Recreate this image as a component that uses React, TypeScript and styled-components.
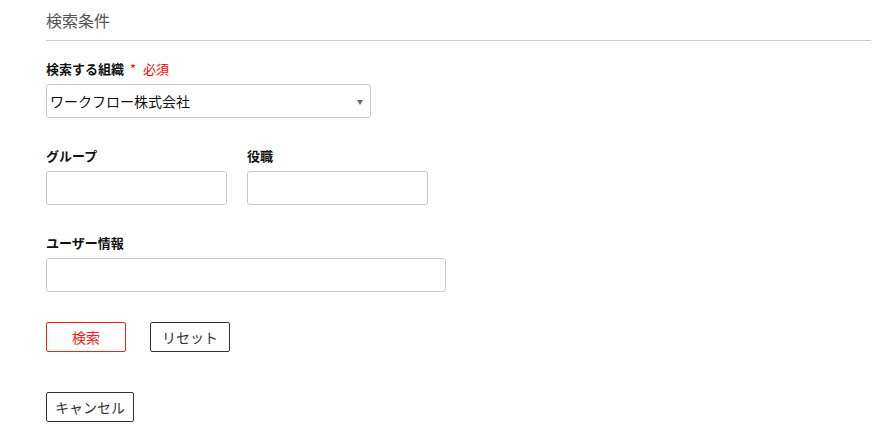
import React from "react";
import styled, { createGlobalStyle } from "styled-components";

const GlobalStyle = createGlobalStyle`
  body {
    margin: 0;
    background: #fff;
    font-family: "Noto Sans CJK JP", "Noto Sans", sans-serif;
    color: #222;
  }
`;

const Page = styled.div`
  padding: 8px 22px 16px 46px;
`;

const Title = styled.h2`
  margin: 0;
  font-size: 16px;
  font-weight: normal;
  line-height: 24px;
  color: #555;
  padding-bottom: 8px;
  border-bottom: 1px solid #d0cdc8;
`;

const Form = styled.div`
  display: flex;
  flex-direction: column;
  gap: 28px;
  padding-top: 18px;
`;

const Row = styled.div`
  display: flex;
  gap: 20px;
`;

const Field = styled.div`
  display: flex;
  flex-direction: column;
  gap: 5px;
`;

const Label = styled.label`
  font-size: 13px;
  font-weight: bold;
  line-height: 20px;
  color: #111;
`;

const Asterisk = styled.span`
  margin-left: 6px;
  font-weight: normal;
  color: #f00;
`;

const Required = styled.span`
  margin-left: 7px;
  font-weight: normal;
  color: #f00;
`;

const Box = styled.div<{ $w: number }>`
  box-sizing: border-box;
  width: ${(p) => p.$w}px;
  height: 34px;
  border: 1px solid #ccc9c3;
  border-radius: 3px;
  background: #fff;
`;

const Select = styled(Box)`
  display: flex;
  align-items: center;
  justify-content: space-between;
  padding: 0 7px 0 3px;
  font-size: 14px;
  color: #111;
`;

const Caret = styled.span`
  width: 0;
  height: 0;
  border-left: 3.5px solid transparent;
  border-right: 3.5px solid transparent;
  border-top: 5px solid #666;
  margin-top: 2px;
`;

const Buttons = styled.div`
  display: flex;
  gap: 24px;
  padding-top: 2px;
`;

const Button = styled.button<{ $danger?: boolean }>`
  box-sizing: border-box;
  min-width: 80px;
  height: 30px;
  padding: 0 8px;
  background: #fff;
  border: 1px solid ${(p) => (p.$danger ? "#f2200c" : "#333")};
  border-radius: 2px;
  color: ${(p) => (p.$danger ? "#f2200c" : "#333")};
  font-family: "Noto Sans CJK JP", "Noto Sans", sans-serif;
  font-size: 14px;
  cursor: pointer;
`;

const Footer = styled.div`
  padding-top: 12px;
`;

export default function App() {
  return (
    <>
      <GlobalStyle />
      <Page>
        <Title>検索条件</Title>
        <Form>
          <Field>
            <Label>
              検索する組織<Asterisk>*</Asterisk>
              <Required>必須</Required>
            </Label>
            <Select $w={325}>
              <span>ワークフロー株式会社</span>
              <Caret />
            </Select>
          </Field>
          <Row>
            <Field>
              <Label>グループ</Label>
              <Box $w={181} />
            </Field>
            <Field>
              <Label>役職</Label>
              <Box $w={181} />
            </Field>
          </Row>
          <Field>
            <Label>ユーザー情報</Label>
            <Box $w={400} />
          </Field>
          <Buttons>
            <Button $danger>検索</Button>
            <Button>リセット</Button>
          </Buttons>
          <Footer>
            <Button>キャンセル</Button>
          </Footer>
        </Form>
      </Page>
    </>
  );
}
